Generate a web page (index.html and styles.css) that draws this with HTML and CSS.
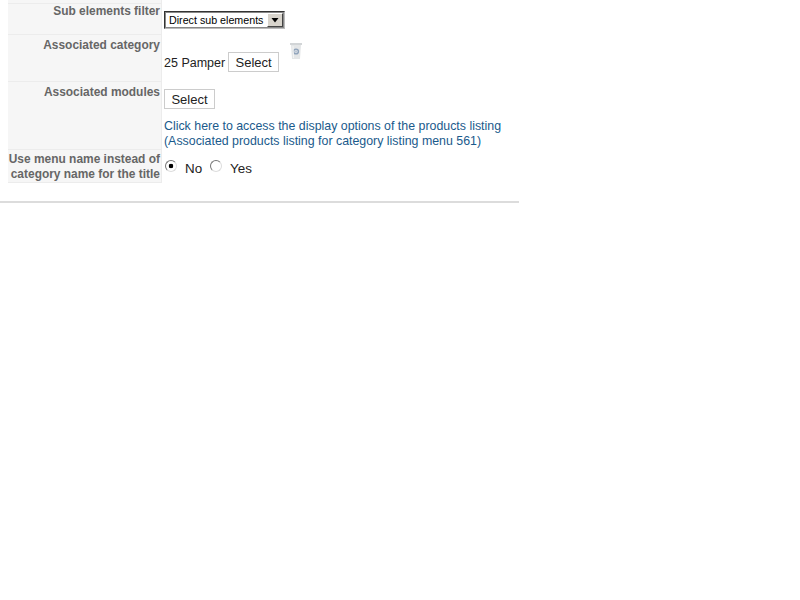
FILE: index.html
```html
<!DOCTYPE html>
<html lang="en">
<head>
<meta charset="utf-8">
<title>Menu options</title>
<link rel="stylesheet" href="styles.css">
</head>
<body>
<div class="panel">
<table class="form">
<tr class="r0"><th></th><td></td></tr>
<tr class="r1">
<th>Sub elements filter</th>
<td><div class="select"><span class="select-text">Direct sub elements</span><span class="select-btn"><svg width="9" height="5" viewBox="0 0 9 5"><path d="M0.5 0h7l-3.5 4.5z" fill="#000"/></svg></span></div></td>
</tr>
<tr class="r2">
<th>Associated category</th>
<td><div class="cat"><span>25 Pamper</span><button class="btn">Select</button>
<svg class="trash" width="14" height="18" viewBox="0 0 14 18"><path d="M2 3h10l-1 14H3z" fill="#e4e6e7"/><path d="M1 1h12v2H1z" fill="#d2d5d7"/><circle cx="7" cy="9.5" r="2.4" fill="none" stroke="#8ea2ba" stroke-width="1.4"/><path d="M6 8.5h2v2H6z" fill="#b9c6d6"/><path d="M4 4l.6 12" stroke="#f4f5f5"/></svg></div></td>
</tr>
<tr class="r3">
<th>Associated modules</th>
<td><button class="btn">Select</button>
<a class="link" href="#">Click here to access the display options of the products listing<br>(Associated products listing for category listing menu 561)</a></td>
</tr>
<tr class="r4">
<th>Use menu name instead of<br>category name for the title</th>
<td><div class="radios"><input class="radio" type="radio" name="t" checked><span class="opt">No</span><input class="radio" type="radio" name="t"><span class="opt">Yes</span></div></td>
</tr>
</table>
</div>
</body>
</html>
```
FILE: styles.css
```css
html, body { margin: 0; background: #fff; }
body { font-family: "Liberation Sans", Arial, sans-serif; font-size: 12px; color: #222; }
.panel { width: 519px; height: 203px; border-bottom: 2px solid #dcdcdc; padding-left: 8px; box-sizing: border-box; }
.form { border-collapse: separate; border-spacing: 0; }
.form th { width: 154px; box-sizing: border-box; background: #f6f6f6; border-bottom: 1px solid #ececec; border-right: 1px solid #ececec; color: #666; font-weight: bold; font-size: 11.95px; line-height: 15px; text-align: right; vertical-align: top; padding: 3px 1px 0 0; white-space: nowrap; }
.form td { padding: 0 0 0 2px; vertical-align: top; }
.r0 th { height: 4px; padding: 0; line-height: 0; }
.r1 th { height: 31px; padding-top: 0; }
.r2 th { height: 47px; }
.r3 th { height: 68px; }
.r4 th { height: 33px; padding-top: 2px; }
.select { margin-top: 7px; width: 121px; height: 18px; box-sizing: border-box; border: 1px solid #333; border-right-color: #bbb; border-bottom-color: #bbb; outline: 1px solid #888; outline-offset: -2px; display: flex; align-items: center; justify-content: space-between; font-size: 10.7px; color: #000; padding: 0 1px 0 4px; background: #fff; }
.select-btn { width: 16px; height: 14px; background: #d8d4cc; border: 1px solid; border-color: #fff #444 #444 #fff; box-sizing: border-box; display: flex; align-items: center; justify-content: center; }
.cat { display: flex; align-items: flex-start; margin-top: 17px; font-size: 12.5px; }
.cat span { margin-top: 4px; }
.btn { font-family: inherit; font-size: 13px; line-height: 15px; color: #222; background: #fff; border: 1px solid #ccc; width: 51px; height: 20px; padding: 0; margin: 0; }
.cat .btn { margin-left: 3px; }
.trash { margin: -10px 0 0 10px; }
.r3 td .btn { display: block; margin-top: 7px; }
.link { display: block; margin-top: 10px; color: #1a5a8c; font-size: 12.38px; line-height: 15px; text-decoration: none; }
.radios { display: flex; align-items: flex-start; margin-top: 10px; font-size: 13.4px; }
.radio { appearance: none; margin: 0 0 0 1px; width: 12px; height: 12px; border-radius: 50%; border: 1px solid #777; border-bottom-color: #ddd; border-right-color: #ddd; background: #fff; }
.radio:checked { background: radial-gradient(circle, #000 0 2px, #fff 2.6px); }
.opt { margin: 1px 0 0 8px; line-height: 15px; width: 24px; }
```
